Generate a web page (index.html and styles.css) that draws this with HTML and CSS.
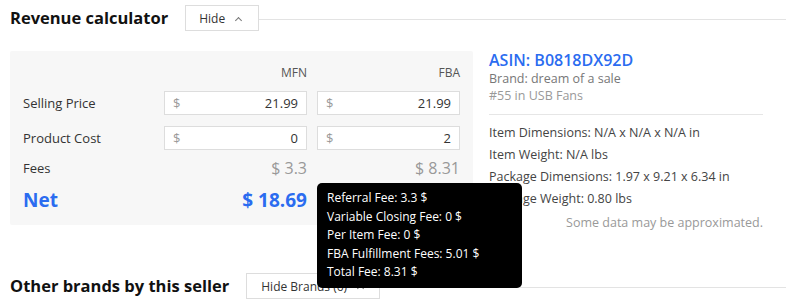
FILE: index.html
```html
<!DOCTYPE html>
<html lang="en">
<head>
    <meta charset="UTF-8">
    <meta name="viewport" content="width=device-width, initial-scale=1.0">
    <title>Revenue calculator</title>
    <link rel="stylesheet" href="styles.css">
</head>
<body>
    <div class="section-head">
        <h2>Revenue calculator</h2>
        <button class="toggle">Hide <span class="chev"></span></button>
        <div class="rule"></div>
    </div>

    <div class="calc-row">
        <div class="calc">
            <div class="row head">
                <div class="label"></div>
                <div class="cell">MFN</div>
                <div class="cell">FBA</div>
            </div>
            <div class="row inputs first">
                <div class="label">Selling Price</div>
                <div class="field"><span class="cur">$</span><span class="val">21.99</span></div>
                <div class="field"><span class="cur">$</span><span class="val">21.99</span></div>
            </div>
            <div class="row inputs">
                <div class="label">Product Cost</div>
                <div class="field"><span class="cur">$</span><span class="val">0</span></div>
                <div class="field"><span class="cur">$</span><span class="val">2</span></div>
            </div>
            <div class="row fees">
                <div class="label">Fees</div>
                <div class="cell">$ 3.3</div>
                <div class="cell tip-anchor">$ 8.31
                    <div class="tooltip">
                        <p>Referral Fee: 3.3 $</p>
                        <p>Variable Closing Fee: 0 $</p>
                        <p>Per Item Fee: 0 $</p>
                        <p>FBA Fulfillment Fees: 5.01 $</p>
                        <p>Total Fee: 8.31 $</p>
                    </div>
                </div>
            </div>
            <div class="row net">
                <div class="label">Net</div>
                <div class="cell">$ 18.69</div>
                <div class="cell"></div>
            </div>
        </div>

        <div class="product-info">
            <div class="asin">ASIN: B0818DX92D</div>
            <div class="brand">Brand: dream of a sale</div>
            <div class="rank">#55 in USB Fans</div>
            <hr>
            <p>Item Dimensions: N/A x N/A x N/A in</p>
            <p>Item Weight: N/A lbs</p>
            <p>Package Dimensions: 1.97 x 9.21 x 6.34 in</p>
            <p>Package Weight: 0.80 lbs</p>
            <div class="note">Some data may be approximated.</div>
        </div>
    </div>

    <div class="section-head brands-head">
        <h2>Other brands by this seller</h2>
        <button class="toggle wide">Hide Brands (6) <span class="chev"></span></button>
        <div class="rule"></div>
    </div>
</body>
</html>
```

FILE: styles.css
```css
* {
    margin: 0;
    padding: 0;
    box-sizing: border-box;
}

body {
    font-family: "Open Sans", Arial, sans-serif;
    background-color: white;
    color: #333;
    padding: 5px 0 0 10px;
    overflow: hidden;
}

.section-head {
    display: flex;
    align-items: center;
    height: 26px;
}

.section-head h2 {
    font-size: 16.5px;
    font-weight: 700;
    color: #111;
    margin-right: 17px;
    line-height: 26px;
}

.toggle {
    height: 26px;
    width: 74px;
    background-color: white;
    border: 1px solid #ddd;
    font-family: inherit;
    font-size: 12px;
    color: #333;
    text-align: left;
    padding-left: 13px;
}

.toggle.wide {
    width: 134px;
    padding-left: 14px;
}

.chev {
    display: inline-block;
    width: 5px;
    height: 5px;
    border-left: 1px solid #777;
    border-top: 1px solid #777;
    transform: rotate(45deg);
    margin-left: 8px;
    vertical-align: 0px;
}

.rule {
    flex: 1;
    height: 1px;
    background-color: #e3e3e3;
    margin-top: 3px;
}

.calc-row {
    display: flex;
    align-items: flex-start;
    margin-top: 20px;
}

.calc {
    width: 463px;
    background-color: #f7f7f7;
    border-radius: 2px;
    padding: 13px 13px 12px 13px;
}

.row {
    display: grid;
    grid-template-columns: 131px 143px 143px;
    column-gap: 10px;
    align-items: center;
}

.row .cell {
    text-align: right;
}

.head {
    font-size: 12px;
    color: #555;
    line-height: 18px;
}

.label {
    font-size: 13px;
    color: #333;
}

.inputs {
    margin-top: 11px;
}

.inputs.first {
    margin-top: 9px;
}

.field {
    display: flex;
    justify-content: space-between;
    height: 24px;
    line-height: 22px;
    background-color: white;
    border: 1px solid #ddd;
    padding: 0 8px;
    font-size: 13px;
}

.field .cur {
    color: #999;
}

.field .val {
    color: #333;
}

.fees {
    margin-top: 9px;
    line-height: 18px;
}

.fees .cell {
    font-size: 16px;
    color: #999;
}

.net {
    margin-top: 10px;
    line-height: 26px;
}

.net .label, .net .cell {
    font-size: 19px;
    font-weight: 700;
    color: #2b6cf0;
}

.tip-anchor {
    position: relative;
}

.tooltip {
    position: absolute;
    top: 24px;
    left: 0;
    width: 205px;
    background-color: black;
    color: white;
    border-radius: 5px;
    padding: 6px 0 6px 10px;
    text-align: left;
    z-index: 5;
}

.tooltip p {
    font-size: 12px;
    line-height: 18.5px;
    white-space: nowrap;
}

.product-info {
    width: 274px;
    margin-left: 16px;
    font-size: 12.5px;
    color: #444;
}

.asin {
    font-size: 16px;
    font-weight: 600;
    color: #2b6cf0;
    line-height: 20px;
    margin-top: -1px;
}

.brand {
    color: #777;
    line-height: 17px;
}

.rank {
    color: #999;
    line-height: 18px;
}

.product-info hr {
    border: none;
    border-top: 1px solid #e6e6e6;
    margin: 9px 0 7px 0;
}

.product-info p {
    line-height: 22px;
}

.note {
    text-align: right;
    color: #999;
    line-height: 24px;
    margin-top: 1px;
}

.brands-head {
    margin-top: 38px;
}
```
